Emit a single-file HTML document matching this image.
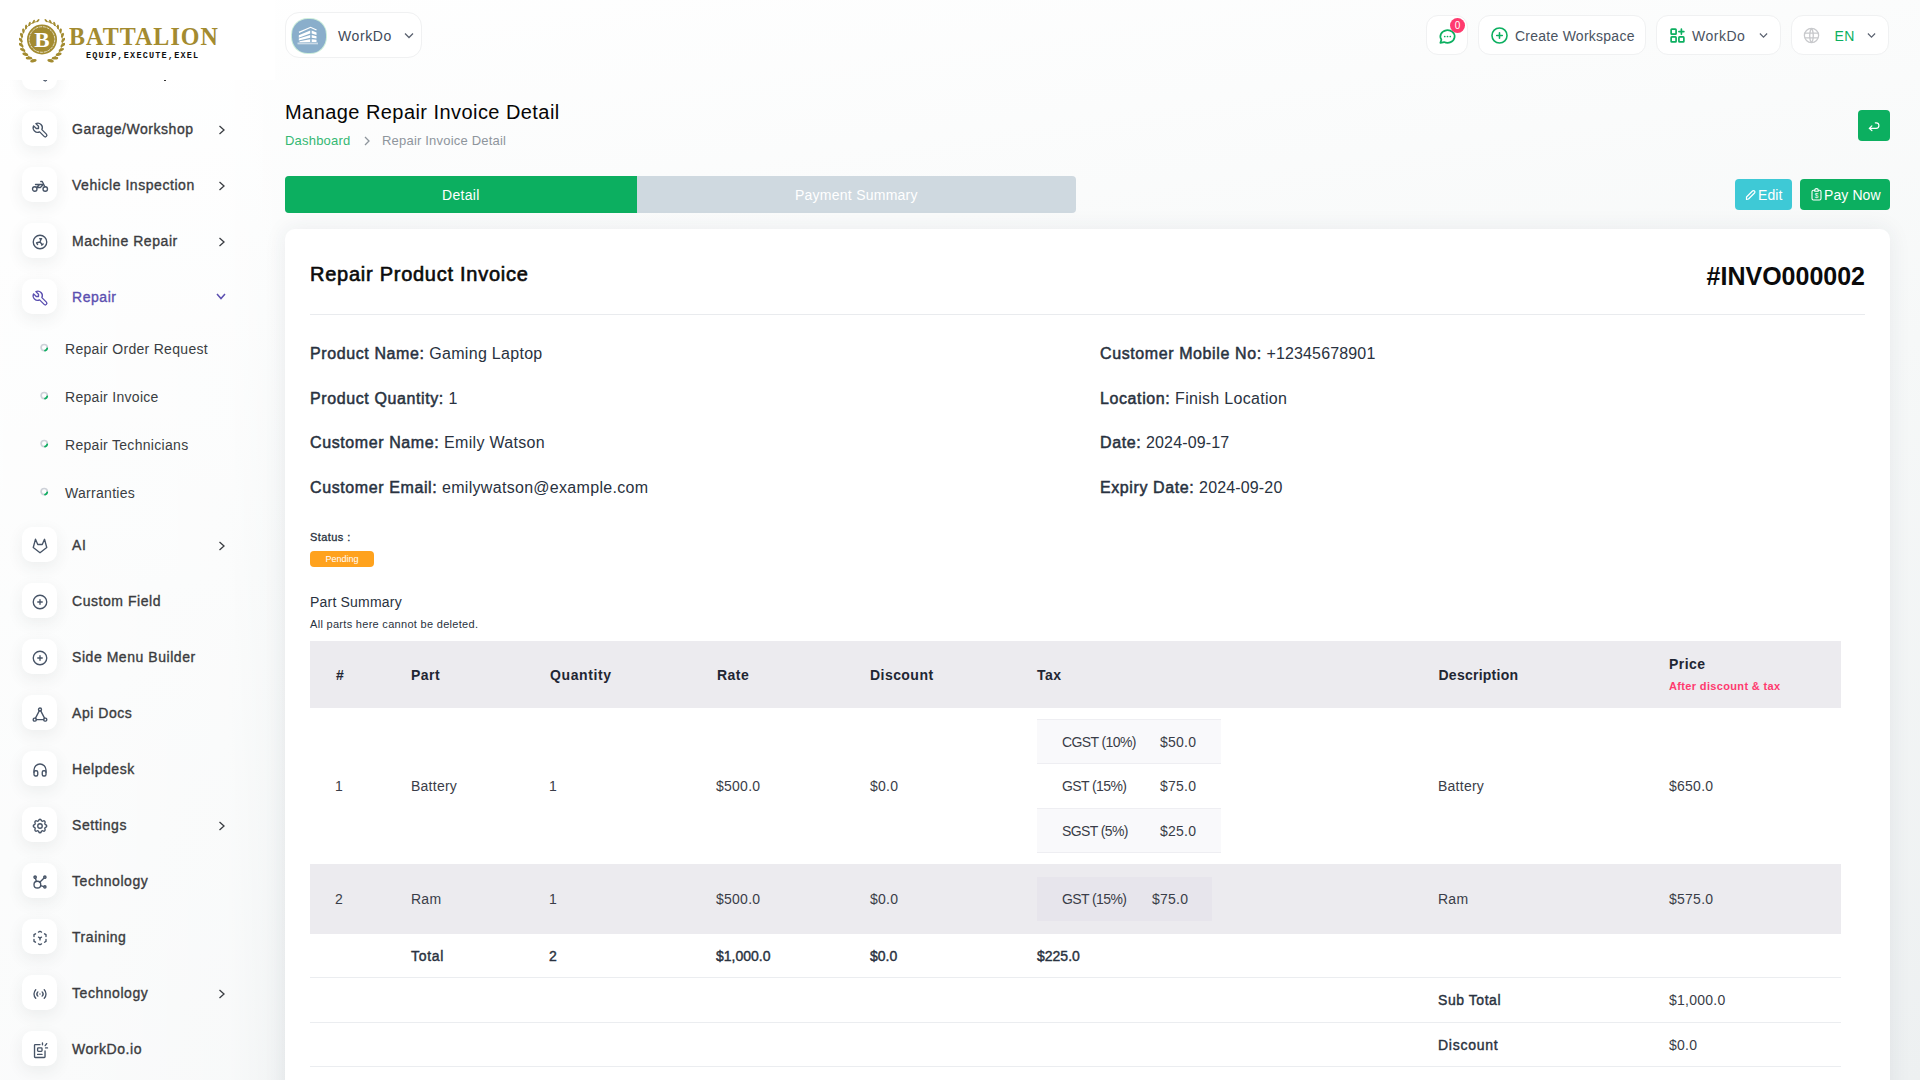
<!DOCTYPE html>
<html><head><meta charset="utf-8">
<style>
*{box-sizing:border-box;margin:0;padding:0}
html,body{width:1920px;height:1080px;overflow:hidden}
body{font-family:"Liberation Sans",sans-serif;background:linear-gradient(90deg,rgba(255,255,255,.7) 0,rgba(255,255,255,.55) 230px,rgba(255,255,255,0) 290px),linear-gradient(172deg,#ffffff 0%,#f6f8f8 45%,#edf0f1 100%);position:relative;color:#293240}
.abs{position:absolute}
.logo{z-index:5;left:0;top:0;width:275px;height:80px;background:#fff}
.sb-item{position:absolute;left:22px;height:35px;width:220px}
.sb-ic{position:absolute;left:0;top:0;width:35px;height:35px;background:#fff;border-radius:10px;box-shadow:0 5px 16px rgba(50,60,70,.08)}
.sb-ic svg{position:absolute;left:8.5px;top:9.7px;width:18px;height:18px}
.sb-tx{position:absolute;left:50px;top:10px;font-size:14px;font-weight:normal;-webkit-text-stroke:.35px currentColor;letter-spacing:.55px;color:#3b3c40;white-space:nowrap;line-height:17px}
.sb-ch{position:absolute;left:196px;top:14px;width:8px;height:10px}
.sub{position:absolute;left:40px;height:20px;width:200px}
.sub svg{position:absolute;left:0;top:4px;width:10px;height:10px}
.sub .tx{position:absolute;left:25px;top:2.5px;font-size:14px;color:#3a3d42;letter-spacing:.3px;white-space:nowrap;line-height:17px}
.hbox{position:absolute;top:15px;height:40px;background:#fff;border:1px solid #f0f1f2;border-radius:12px}
.card{left:285px;top:229px;width:1605px;height:900px;background:#fff;border-radius:10px;box-shadow:0 0 22px rgba(40,50,80,.08)}
.lbl{font-weight:normal;-webkit-text-stroke:.5px currentColor;letter-spacing:.6px}
.info{position:absolute;font-size:16px;letter-spacing:.3px;color:#293240;white-space:nowrap;line-height:20px}
.th{position:absolute;font-size:14px;font-weight:bold;color:#1f2633;white-space:nowrap;line-height:17px;letter-spacing:.45px}
.td{position:absolute;font-size:14px;color:#3a3d48;white-space:nowrap;line-height:17px;letter-spacing:.25px}
.tdb{position:absolute;font-size:14px;font-weight:normal;-webkit-text-stroke:.4px currentColor;color:#293240;white-space:nowrap;line-height:17px}
.hl{position:absolute;left:310px;width:1531px;height:1px;background:#ebedf0}
</style></head><body>

<!-- logo header -->
<div class="abs logo">
<svg class="abs" style="left:19px;top:18px" width="46" height="45" viewBox="0 0 46 45">
  <g fill="#a38b30">
    <g id="lf"><ellipse cx="18.99" cy="2.62" rx="0.90" ry="2.00" transform="rotate(223.0 18.99 2.62)"/><ellipse cx="14.62" cy="3.75" rx="0.96" ry="2.12" transform="rotate(209.7 14.62 3.75)"/><ellipse cx="10.57" cy="5.89" rx="1.03" ry="2.24" transform="rotate(196.5 10.57 5.89)"/><ellipse cx="7.06" cy="8.96" rx="1.09" ry="2.35" transform="rotate(183.2 7.06 8.96)"/><ellipse cx="4.31" cy="12.82" rx="1.15" ry="2.47" transform="rotate(169.9 4.31 12.82)"/><ellipse cx="2.49" cy="17.28" rx="1.22" ry="2.59" transform="rotate(156.6 2.49 17.28)"/><ellipse cx="1.75" cy="22.11" rx="1.28" ry="2.71" transform="rotate(143.4 1.75 22.11)"/><ellipse cx="2.14" cy="27.06" rx="1.35" ry="2.83" transform="rotate(130.1 2.14 27.06)"/><ellipse cx="3.68" cy="31.85" rx="1.41" ry="2.95" transform="rotate(116.8 3.68 31.85)"/><ellipse cx="6.33" cy="36.23" rx="1.47" ry="3.06" transform="rotate(103.5 6.33 36.23)"/><ellipse cx="9.96" cy="39.93" rx="1.54" ry="3.18" transform="rotate(90.3 9.96 39.93)"/><ellipse cx="14.42" cy="42.73" rx="1.60" ry="3.30" transform="rotate(77.0 14.42 42.73)"/><path d="M19.13 3.31 L17.52 3.60 L15.92 4.05 L14.37 4.63 L12.86 5.35 L11.41 6.21 L10.03 7.20 L8.74 8.32 L7.55 9.55 L6.46 10.88 L5.49 12.32 L4.64 13.85 L3.93 15.46 L3.36 17.13 L2.93 18.85 L2.66 20.62 L2.54 22.41 L2.59 24.22 L2.79 26.03 L3.15 27.82 L3.68 29.58 L4.36 31.30 L5.19 32.96 L6.17 34.55 L7.30 36.06 L8.55 37.47 L9.94 38.77 L11.44 39.94 L13.05 40.99 L14.76 41.90" fill="none" stroke="#a38b30" stroke-width=".9"/></g>
    <use href="#lf" transform="translate(46 0) scale(-1 1)"/>
  </g>
  <circle cx="23" cy="21.5" r="15" fill="#a38b30"/>
  <circle cx="23" cy="21.5" r="12.8" fill="none" stroke="#fff" stroke-width=".7" stroke-dasharray="3 .8"/>
  <text x="23" y="28.6" text-anchor="middle" font-family="Liberation Serif" font-weight="bold" font-size="20.5" fill="#fff" transform="translate(23 0) scale(1.12 1) translate(-23 0)">B</text>
</svg>
<div class="abs" style="left:69px;top:24px;font-family:'Liberation Serif',serif;font-weight:bold;font-size:24px;line-height:26px;color:#a38b30;letter-spacing:1.05px;white-space:nowrap;transform:scaleY(1.07);transform-origin:0 20px">BATTALION</div>
<div class="abs" style="left:86px;top:51.5px;font-family:'Liberation Mono',monospace;font-weight:bold;font-size:8.5px;line-height:9px;color:#111;letter-spacing:1.2px;white-space:nowrap">EQUIP,EXECUTE,EXEL</div>
</div>

<!-- sidebar -->
<div class="sb-item" style="top:55.0px"><div class="sb-ic"><svg viewBox="0 0 24 24" fill="none" stroke="#475467" stroke-width="1.8" stroke-linecap="round" stroke-linejoin="round"><path d="M7 10h3v-3l-3.5 -3.5a6 6 0 0 1 8 8l6 6a2 2 0 0 1 -3 3l-6 -6a6 6 0 0 1 -8 -8l3.5 3.5"/></svg></div></div>
<div class="sb-item" style="top:111.0px"><div class="sb-ic"><svg viewBox="0 0 24 24" fill="none" stroke="#475467" stroke-width="1.8" stroke-linecap="round" stroke-linejoin="round"><path d="M7 10h3v-3l-3.5 -3.5a6 6 0 0 1 8 8l6 6a2 2 0 0 1 -3 3l-6 -6a6 6 0 0 1 -8 -8l3.5 3.5"/></svg></div><div class="sb-tx">Garage/Workshop</div><svg class="sb-ch" viewBox="0 0 8 10"><path d="M1.5 1 L6 5 L1.5 9" fill="none" stroke="#3a3d42" stroke-width="1.3"/></svg></div>
<div class="sb-item" style="top:167.0px"><div class="sb-ic"><svg viewBox="0 0 24 24" fill="none" stroke="#475467" stroke-width="1.8" stroke-linecap="round" stroke-linejoin="round"><circle cx="5" cy="16" r="3"/><circle cx="19" cy="16" r="3"/><path d="M7.5 14h5l4 -4h-10.5m1.5 4l4 -4"/><path d="M13 6h2l1.5 3l2 4"/></svg></div><div class="sb-tx">Vehicle Inspection</div><svg class="sb-ch" viewBox="0 0 8 10"><path d="M1.5 1 L6 5 L1.5 9" fill="none" stroke="#3a3d42" stroke-width="1.3"/></svg></div>
<div class="sb-item" style="top:223.0px"><div class="sb-ic"><svg viewBox="0 0 24 24" fill="none" stroke="#475467" stroke-width="1.8" stroke-linecap="round" stroke-linejoin="round"><circle cx="12" cy="12" r="9"/><path d="M12 12l1.6 -4.2M11.6 7.6h2.6M12 12l-4.2 1M7.4 13.2l1.4 2.2M12 12l2.8 3.4M14.2 16.2l2 -1.6"/></svg></div><div class="sb-tx">Machine Repair</div><svg class="sb-ch" viewBox="0 0 8 10"><path d="M1.5 1 L6 5 L1.5 9" fill="none" stroke="#3a3d42" stroke-width="1.3"/></svg></div>
<div class="sb-item" style="top:279.0px"><div class="sb-ic"><svg viewBox="0 0 24 24" fill="none" stroke="#5b4fb0" stroke-width="1.8" stroke-linecap="round" stroke-linejoin="round"><path d="M7 10h3v-3l-3.5 -3.5a6 6 0 0 1 8 8l6 6a2 2 0 0 1 -3 3l-6 -6a6 6 0 0 1 -8 -8l3.5 3.5"/></svg></div><div class="sb-tx" style="color:#5b4fb0">Repair</div><svg class="sb-ch" style="top:14px;width:10px;height:7px;left:193.7px" viewBox="0 0 10 7"><path d="M1 1 L5 5.5 L9 1" fill="none" stroke="#5b4fb0" stroke-width="1.5"/></svg></div>
<div class="sb-item" style="top:527.0px"><div class="sb-ic"><svg viewBox="0 0 24 24" fill="none" stroke="#475467" stroke-width="1.8" stroke-linecap="round" stroke-linejoin="round"><path d="M21 14l-9 7l-9 -7l3 -11l3 7h6l3 -7z"/></svg></div><div class="sb-tx">AI</div><svg class="sb-ch" viewBox="0 0 8 10"><path d="M1.5 1 L6 5 L1.5 9" fill="none" stroke="#3a3d42" stroke-width="1.3"/></svg></div>
<div class="sb-item" style="top:583.0px"><div class="sb-ic"><svg viewBox="0 0 24 24" fill="none" stroke="#475467" stroke-width="1.8" stroke-linecap="round" stroke-linejoin="round"><circle cx="12" cy="12" r="9"/><path d="M9 12h6M12 9v6"/></svg></div><div class="sb-tx">Custom Field</div></div>
<div class="sb-item" style="top:639.0px"><div class="sb-ic"><svg viewBox="0 0 24 24" fill="none" stroke="#475467" stroke-width="1.8" stroke-linecap="round" stroke-linejoin="round"><circle cx="12" cy="12" r="9"/><path d="M9 12h6M12 9v6"/></svg></div><div class="sb-tx">Side Menu Builder</div></div>
<div class="sb-item" style="top:695.0px"><div class="sb-ic"><svg viewBox="0 0 24 24" fill="none" stroke="#475467" stroke-width="1.8" stroke-linecap="round" stroke-linejoin="round"><circle cx="12" cy="6" r="2"/><rect x="3" y="17.5" width="4" height="4" rx="1.5"/><rect x="17" y="17.5" width="4" height="4" rx="1.5"/><path d="M11 7.8l-5 9.7M13 7.8l5 9.7M7 19.5h10"/></svg></div><div class="sb-tx">Api Docs</div></div>
<div class="sb-item" style="top:751.0px"><div class="sb-ic"><svg viewBox="0 0 24 24" fill="none" stroke="#475467" stroke-width="1.8" stroke-linecap="round" stroke-linejoin="round"><path d="M4 15a2 2 0 0 1 2 -2h1a2 2 0 0 1 2 2v3a2 2 0 0 1 -2 2h-1a2 2 0 0 1 -2 -2z"/><path d="M15 15a2 2 0 0 1 2 -2h1a2 2 0 0 1 2 2v3a2 2 0 0 1 -2 2h-1a2 2 0 0 1 -2 -2z"/><path d="M4 15v-3a8 8 0 0 1 16 0v3"/></svg></div><div class="sb-tx">Helpdesk</div></div>
<div class="sb-item" style="top:807.0px"><div class="sb-ic"><svg viewBox="0 0 24 24" fill="none" stroke="#475467" stroke-width="1.8" stroke-linecap="round" stroke-linejoin="round"><path d="M10.325 4.317c.426 -1.756 2.924 -1.756 3.35 0a1.724 1.724 0 0 0 2.573 1.066c1.543 -.94 3.31 .826 2.37 2.37a1.724 1.724 0 0 0 1.065 2.572c1.756 .426 1.756 2.924 0 3.35a1.724 1.724 0 0 0 -1.066 2.573c.94 1.543 -.826 3.31 -2.37 2.37a1.724 1.724 0 0 0 -2.572 1.065c-.426 1.756 -2.924 1.756 -3.35 0a1.724 1.724 0 0 0 -2.573 -1.066c-1.543 .94 -3.31 -.826 -2.37 -2.37a1.724 1.724 0 0 0 -1.065 -2.572c-1.756 -.426 -1.756 -2.924 0 -3.35a1.724 1.724 0 0 0 1.066 -2.573c-.94 -1.543 .826 -3.31 2.37 -2.37c1 .608 2.296 .07 2.572 -1.065z"/><circle cx="12" cy="12" r="3"/></svg></div><div class="sb-tx">Settings</div><svg class="sb-ch" viewBox="0 0 8 10"><path d="M1.5 1 L6 5 L1.5 9" fill="none" stroke="#3a3d42" stroke-width="1.3"/></svg></div>
<div class="sb-item" style="top:863.0px"><div class="sb-ic"><svg viewBox="0 0 24 24" fill="none" stroke="#475467" stroke-width="1.8" stroke-linecap="round" stroke-linejoin="round"><path d="M5.931 6.936l1.275 4.249m5.607 5.609l4.251 1.275"/><path d="M11.683 12.317l5.759 -5.759"/><circle cx="5.5" cy="5.5" r="1.5"/><circle cx="18.5" cy="5.5" r="1.5"/><circle cx="18.5" cy="18.5" r="1.5"/><circle cx="8.5" cy="15.5" r="4.5"/></svg></div><div class="sb-tx">Technology</div></div>
<div class="sb-item" style="top:919.0px"><div class="sb-ic"><svg viewBox="0 0 24 24" fill="none" stroke="#475467" stroke-width="1.8" stroke-linecap="round" stroke-linejoin="round"><path d="M6 17.6l-2 -1.1v-2.5"/><path d="M4 10v-2.5l2 -1.1"/><path d="M10 4.1l2 -1.1l2 1.1"/><path d="M18 6.4l2 1.1v2.5"/><path d="M20 14v2.5l-2 1.12"/><path d="M14 19.9l-2 1.1l-2 -1.1"/><path d="M12 12l2 -1.1"/><path d="M12 12l0 2.5"/><path d="M12 12l-2 -1.12"/></svg></div><div class="sb-tx">Training</div></div>
<div class="sb-item" style="top:975.0px"><div class="sb-ic"><svg viewBox="0 0 24 24" fill="none" stroke="#475467" stroke-width="1.8" stroke-linecap="round" stroke-linejoin="round"><path d="M12 12l0 .01"/><path d="M14.828 9.172a4 4 0 0 1 0 5.656"/><path d="M17.657 6.343a8 8 0 0 1 0 11.314"/><path d="M9.168 14.828a4 4 0 0 1 0 -5.656"/><path d="M6.337 17.657a8 8 0 0 1 0 -11.314"/></svg></div><div class="sb-tx">Technology</div><svg class="sb-ch" viewBox="0 0 8 10"><path d="M1.5 1 L6 5 L1.5 9" fill="none" stroke="#3a3d42" stroke-width="1.3"/></svg></div>
<div class="sb-item" style="top:1031.0px"><div class="sb-ic"><svg viewBox="0 0 24 24" fill="none" stroke="#475467" stroke-width="1.8" stroke-linecap="round" stroke-linejoin="round"><path d="M12 4.8h-6.3a1 1 0 0 0 -1 1v15.2a1 1 0 0 0 1 1h12a1 1 0 0 0 1 -1v-7.7"/><rect x="8.8" y="9.2" width="5.9" height="4.6" rx="1"/><path d="M8.8 17.9h5.9M15.3 2.6v2.4M18.9 6.2l2 -2.7M19.4 9.2h2.6"/></svg></div><div class="sb-tx">WorkDo.io</div></div>
<div class="sub" style="top:338.5px"><svg viewBox="0 0 10 10"><circle cx="4.2" cy="4.6" r="3.1" fill="none" stroke="#cdd1d8" stroke-width="1.7"/><path d="M7.2 5.4 A3.1 3.1 0 0 1 5 7.6" fill="none" stroke="#0caf60" stroke-width="1.8" stroke-linecap="round"/></svg><div class="tx">Repair Order Request</div></div>
<div class="sub" style="top:386.5px"><svg viewBox="0 0 10 10"><circle cx="4.2" cy="4.6" r="3.1" fill="none" stroke="#cdd1d8" stroke-width="1.7"/><path d="M7.2 5.4 A3.1 3.1 0 0 1 5 7.6" fill="none" stroke="#0caf60" stroke-width="1.8" stroke-linecap="round"/></svg><div class="tx">Repair Invoice</div></div>
<div class="sub" style="top:434.5px"><svg viewBox="0 0 10 10"><circle cx="4.2" cy="4.6" r="3.1" fill="none" stroke="#cdd1d8" stroke-width="1.7"/><path d="M7.2 5.4 A3.1 3.1 0 0 1 5 7.6" fill="none" stroke="#0caf60" stroke-width="1.8" stroke-linecap="round"/></svg><div class="tx">Repair Technicians</div></div>
<div class="sub" style="top:482.5px"><svg viewBox="0 0 10 10"><circle cx="4.2" cy="4.6" r="3.1" fill="none" stroke="#cdd1d8" stroke-width="1.7"/><path d="M7.2 5.4 A3.1 3.1 0 0 1 5 7.6" fill="none" stroke="#0caf60" stroke-width="1.8" stroke-linecap="round"/></svg><div class="tx">Warranties</div></div>

<div class="abs" style="z-index:6;left:164px;top:80px;width:2px;height:1px;background:#333"></div>
<!-- workspace selector -->
<div class="hbox" style="left:285px;top:12px;width:137px;height:46px;border-radius:14px">
  <div class="abs" style="left:5.5px;top:5.5px;width:34px;height:34px;border-radius:46%;background:#8aaecb;box-shadow:0 0 0 1px #cdeedb">
  <svg class="abs" style="left:-1.5px;top:-0.5px" width="35" height="35" viewBox="0 0 35 35" ><g transform="translate(0 1.5) scale(1 .9)"><path d="M9 14.3 L20.6 8.7 L26.5 11.7" fill="none" stroke="#fff" stroke-width="1.3"/><path fill="#fff" d="M8.8 17.5 L20.2 12.3 V15.6 L8.8 20.3Z M21.7 12.3 L26.5 14.5 V17.1 L21.7 15.6Z M8.8 21.2 L20.2 17.3 V20.4 L8.8 23.4Z M21.7 17.3 L26.5 18.6 V21.2 L21.7 20.4Z M9.5 24.2 L20.2 21.9 V24.9 L9.5 25.4Z M21.7 21.9 L26.5 22.6 V24.9 L21.7 24.9Z"/><rect x="7.5" y="25.6" width="20.5" height="2" fill="#fff" opacity=".55"/></g></svg>
</div>
  <div class="abs" style="left:52px;top:15px;font-size:14px;color:#3f4a5a;letter-spacing:.6px;line-height:17px">WorkDo</div>
  <svg class="abs" style="left:118px;top:19px" width="10" height="7" viewBox="0 0 10 7"><path d="M1 1.5 L5 5.5 L9 1.5" fill="none" stroke="#5b6270" stroke-width="1.3"/></svg>
</div>

<!-- header right -->
<div class="hbox" style="left:1426px;width:42px">
  <svg class="abs" style="left:11px;top:11px" width="19" height="19" viewBox="0 0 24 24" fill="none" stroke="#0caf60" stroke-width="2.2" stroke-linecap="round" stroke-linejoin="round"><path d="M3 20l1.3 -3.9a9 8 0 1 1 3.4 2.9l-4.7 1"/><path d="M8.5 12h.01M12 12h.01M15.5 12h.01"/></svg>
  <div class="abs" style="left:23px;top:2px;width:15px;height:15px;border-radius:50%;background:#ff3a6e;color:#fff;font-size:10px;line-height:15px;text-align:center">0</div>
</div>
<div class="hbox" style="left:1478px;width:168px">
  <svg class="abs" style="left:11px;top:10px" width="19" height="19" viewBox="0 0 24 24" fill="none" stroke="#0caf60" stroke-width="2" stroke-linecap="round"><circle cx="12" cy="12" r="9.5"/><path d="M8.5 12h7M12 8.5v7"/></svg>
  <div class="abs" style="left:36px;top:12px;font-size:14px;color:#4a5361;letter-spacing:.25px;line-height:17px;white-space:nowrap">Create Workspace</div>
</div>
<div class="hbox" style="left:1656px;width:125px">
  <svg class="abs" style="left:12px;top:11px" width="17" height="17" viewBox="0 0 24 24" fill="none" stroke="#0caf60" stroke-width="2.4" stroke-linecap="round" stroke-linejoin="round"><rect x="3" y="3" width="7" height="7" rx="1"/><rect x="3" y="14" width="7" height="7" rx="1"/><rect x="14" y="14" width="7" height="7" rx="1"/><path d="M14 6.5h7M17.5 3v7"/></svg>
  <div class="abs" style="left:35px;top:12px;font-size:14px;color:#4a5361;letter-spacing:.5px;line-height:17px">WorkDo</div>
  <svg class="abs" style="left:102px;top:16px" width="9" height="7" viewBox="0 0 10 7"><path d="M1 1.3 L5 5.3 L9 1.3" fill="none" stroke="#5b6270" stroke-width="1.3"/></svg>
</div>
<div class="hbox" style="left:1791px;width:98px">
  <svg class="abs" style="left:10px;top:10px" width="19" height="19" viewBox="0 0 24 24" fill="none" stroke="#c8c9cc" stroke-width="1.6"><circle cx="12" cy="12" r="9"/><path d="M3.6 9h16.8M3.6 15h16.8M12 3c-3 3.5 -3 14.5 0 18M12 3c3 3.5 3 14.5 0 18"/></svg>
  <div class="abs" style="left:42.5px;top:12px;font-size:14px;color:#0caf60;letter-spacing:.4px;line-height:17px">EN</div>
  <svg class="abs" style="left:75px;top:16px" width="9" height="7" viewBox="0 0 10 7"><path d="M1 1.3 L5 5.3 L9 1.3" fill="none" stroke="#5b6270" stroke-width="1.3"/></svg>
</div>

<!-- page title -->
<div class="abs" style="left:285px;top:100px;font-size:20px;color:#060606;letter-spacing:.44px;line-height:24px;white-space:nowrap">Manage Repair Invoice Detail</div>
<div class="abs" style="left:285px;top:133px;font-size:13px;line-height:16px;white-space:nowrap">
  <span style="color:#35b873;letter-spacing:.2px">Dashboard</span>
</div>
<svg class="abs" style="left:363px;top:136px" width="8" height="10" viewBox="0 0 8 10"><path d="M2 1 L6 5 L2 9" fill="none" stroke="#8e959c" stroke-width="1.3"/></svg>
<div class="abs" style="left:382px;top:133px;font-size:13px;line-height:16px;color:#8e959c;letter-spacing:.2px;white-space:nowrap">Repair Invoice Detail</div>

<!-- back button -->
<div class="abs" style="left:1858px;top:110px;width:32px;height:31px;background:#0caf60;border-radius:4px"><svg class="abs" style="left:10px;top:11px" width="12" height="10.5" viewBox="0 0 14 12"><path d="M4.5 5.5 L1.5 8.5 L4.5 11 M1.5 8.5 H9.5 A3.2 3.2 0 0 0 9.5 2 H8.5" fill="none" stroke="#fff" stroke-width="1.4" stroke-linecap="round" stroke-linejoin="round"/></svg></div>

<!-- tabs -->
<div class="abs" style="left:285px;top:176px;width:791px;height:37px;border-radius:4px;background:#cfd9e0;overflow:hidden">
  <div class="abs" style="left:0;top:0;width:352px;height:37px;background:#0caf60"></div>
  <div class="abs" style="left:157px;top:11px;font-size:14px;color:#fff;line-height:17px;letter-spacing:.3px">Detail</div>
  <div class="abs" style="left:510px;top:11px;font-size:14px;color:#fff;line-height:17px;letter-spacing:.25px">Payment Summary</div>
</div>

<!-- Edit / Pay now -->
<div class="abs" style="left:1735px;top:179px;width:57px;height:31px;background:#3ec9d6;border-radius:4px">
  <svg class="abs" style="left:10px;top:10px" width="11" height="12" viewBox="0 0 11 12"><path d="M1.5 10.5 L1.5 8 L7.5 2 A1.4 1.4 0 0 1 9.5 4 L3.5 10 Z" fill="none" stroke="#fff" stroke-width="1.2" stroke-linejoin="round"/></svg>
  <div class="abs" style="left:23px;top:8px;font-size:14px;color:#fff;letter-spacing:.05px;line-height:17px">Edit</div>
</div>
<div class="abs" style="left:1800px;top:179px;width:90px;height:31px;background:#0caf60;border-radius:4px">
  <svg class="abs" style="left:11px;top:9px" width="11" height="13" viewBox="0 0 11 13"><path d="M3.5 2.2 H2.5 A1.5 1.5 0 0 0 1 3.7 V10.5 A1.5 1.5 0 0 0 2.5 12 H8.5 A1.5 1.5 0 0 0 10 10.5 V3.7 A1.5 1.5 0 0 0 8.5 2.2 H7.5 M3.8 3.2 V2 A1.7 1.4 0 0 1 7.2 2 V3.2 Z" fill="none" stroke="#fff" stroke-width="1.1"/><text x="5.5" y="10.3" text-anchor="middle" font-size="6.5" font-family="Liberation Sans" fill="#fff">$</text></svg>
  <div class="abs" style="left:24px;top:8px;font-size:14px;color:#fff;letter-spacing:.1px;line-height:17px;white-space:nowrap">Pay Now</div>
</div>

<!-- card -->
<div class="abs card"></div>
<div class="abs" style="left:310px;top:262px;font-size:20px;font-weight:normal;-webkit-text-stroke:.6px currentColor;letter-spacing:.74px;color:#0b0b0b;line-height:24px;white-space:nowrap">Repair Product Invoice</div>
<div class="abs" style="left:1665px;top:261.5px;width:200px;text-align:right;font-size:25px;font-weight:bold;color:#0b0b0b;line-height:28px;white-space:nowrap">#INVO000002</div>
<div class="abs" style="left:310px;top:314px;width:1555px;height:1px;background:#e9ebee"></div>

<div class="info" style="left:310px;top:344px"><span class="lbl">Product Name:</span> Gaming Laptop</div>
<div class="info" style="left:310px;top:389px"><span class="lbl">Product Quantity:</span> 1</div>
<div class="info" style="left:310px;top:433px"><span class="lbl">Customer Name:</span> Emily Watson</div>
<div class="info" style="left:310px;top:478px"><span class="lbl">Customer Email:</span> emilywatson@example.com</div>
<div class="info" style="left:1100px;top:344px"><span class="lbl">Customer Mobile No:</span> <span style="letter-spacing:.15px">+12345678901</span></div>
<div class="info" style="left:1100px;top:389px"><span class="lbl">Location:</span> Finish Location</div>
<div class="info" style="left:1100px;top:433px"><span class="lbl">Date:</span> <span style="letter-spacing:.15px">2024-09-17</span></div>
<div class="info" style="left:1100px;top:478px"><span class="lbl">Expiry Date:</span> <span style="letter-spacing:.15px">2024-09-20</span></div>

<div class="abs" style="left:310px;top:531px;font-size:11px;font-weight:normal;-webkit-text-stroke:.3px currentColor;letter-spacing:.43px;color:#293240;line-height:13px">Status :</div>
<div class="abs" style="left:310px;top:551px;width:64px;height:16px;border-radius:4px;background:#ffa21d;color:#fff;font-size:9px;line-height:16px;text-align:center">Pending</div>
<div class="abs" style="left:310px;top:594px;font-size:14px;color:#293240;line-height:17px;letter-spacing:.2px">Part Summary</div>
<div class="abs" style="left:310px;top:618px;font-size:11px;color:#293240;line-height:13px;letter-spacing:.3px">All parts here cannot be deleted.</div>

<!-- table -->
<div class="abs" style="left:310px;top:641px;width:1531px;height:67px;background:#ecebef"></div>
<div class="th" style="left:336px;top:666.5px">#</div>
<div class="th" style="left:411px;top:666.5px">Part</div>
<div class="th" style="left:550px;top:666.5px;letter-spacing:.6px">Quantity</div>
<div class="th" style="left:717px;top:666.5px">Rate</div>
<div class="th" style="left:870px;top:666.5px">Discount</div>
<div class="th" style="left:1037px;top:666.5px">Tax</div>
<div class="th" style="left:1438.5px;top:666.5px;letter-spacing:.25px">Description</div>
<div class="th" style="left:1669px;top:655.5px">Price</div>
<div class="abs" style="left:1669px;top:680px;font-size:11px;font-weight:bold;color:#ff3a6e;line-height:13px;letter-spacing:.35px;white-space:nowrap">After discount &amp; tax</div>

<!-- row1 -->
<div class="abs" style="left:1037px;top:719px;width:184px;height:134px;background:#fff;border-top:1px solid #eeeef2;border-bottom:1px solid #eeeef2"></div>
<div class="abs" style="left:1037px;top:720px;width:184px;height:44px;background:#f9f9fb;border-bottom:1px solid #eeeef2"></div>
<div class="abs" style="left:1037px;top:808px;width:184px;height:44px;background:#f9f9fb;border-top:1px solid #eeeef2"></div>
<div class="td" style="left:1062px;top:734px;letter-spacing:-.6px">CGST (10%)</div><div class="td" style="left:1160px;top:734px">$50.0</div>
<div class="td" style="left:1062px;top:778px;letter-spacing:-.6px">GST (15%)</div><div class="td" style="left:1160px;top:778px">$75.0</div>
<div class="td" style="left:1062px;top:823px;letter-spacing:-.6px">SGST (5%)</div><div class="td" style="left:1160px;top:823px">$25.0</div>
<div class="td" style="left:335px;top:778px">1</div>
<div class="td" style="left:411px;top:778px">Battery</div>
<div class="td" style="left:549px;top:778px">1</div>
<div class="td" style="left:716px;top:778px">$500.0</div>
<div class="td" style="left:870px;top:778px">$0.0</div>
<div class="td" style="left:1438px;top:778px">Battery</div>
<div class="td" style="left:1669px;top:778px">$650.0</div>

<!-- row2 -->
<div class="abs" style="left:310px;top:864px;width:1531px;height:69.5px;background:#ecebef"></div>
<div class="abs" style="left:1037px;top:877px;width:175px;height:44px;background:#e7e5ec"></div>
<div class="td" style="left:335px;top:891px">2</div>
<div class="td" style="left:411px;top:891px">Ram</div>
<div class="td" style="left:549px;top:891px">1</div>
<div class="td" style="left:716px;top:891px">$500.0</div>
<div class="td" style="left:870px;top:891px">$0.0</div>
<div class="td" style="left:1062px;top:891px;letter-spacing:-.6px">GST (15%)</div><div class="td" style="left:1152px;top:891px">$75.0</div>
<div class="td" style="left:1438px;top:891px">Ram</div>
<div class="td" style="left:1669px;top:891px">$575.0</div>

<!-- totals -->
<div class="tdb" style="left:411px;top:948px;letter-spacing:.7px">Total</div>
<div class="tdb" style="left:549px;top:948px">2</div>
<div class="tdb" style="left:716px;top:948px">$1,000.0</div>
<div class="tdb" style="left:870px;top:948px">$0.0</div>
<div class="tdb" style="left:1037px;top:948px">$225.0</div>
<div class="hl" style="top:977px"></div>
<div class="tdb" style="left:1438px;top:992px;letter-spacing:.55px">Sub Total</div>
<div class="td" style="left:1669px;top:992px">$1,000.0</div>
<div class="hl" style="top:1022px"></div>
<div class="tdb" style="left:1438px;top:1037px;letter-spacing:.75px">Discount</div>
<div class="td" style="left:1669px;top:1037px">$0.0</div>
<div class="hl" style="top:1066px"></div>

</body></html>
